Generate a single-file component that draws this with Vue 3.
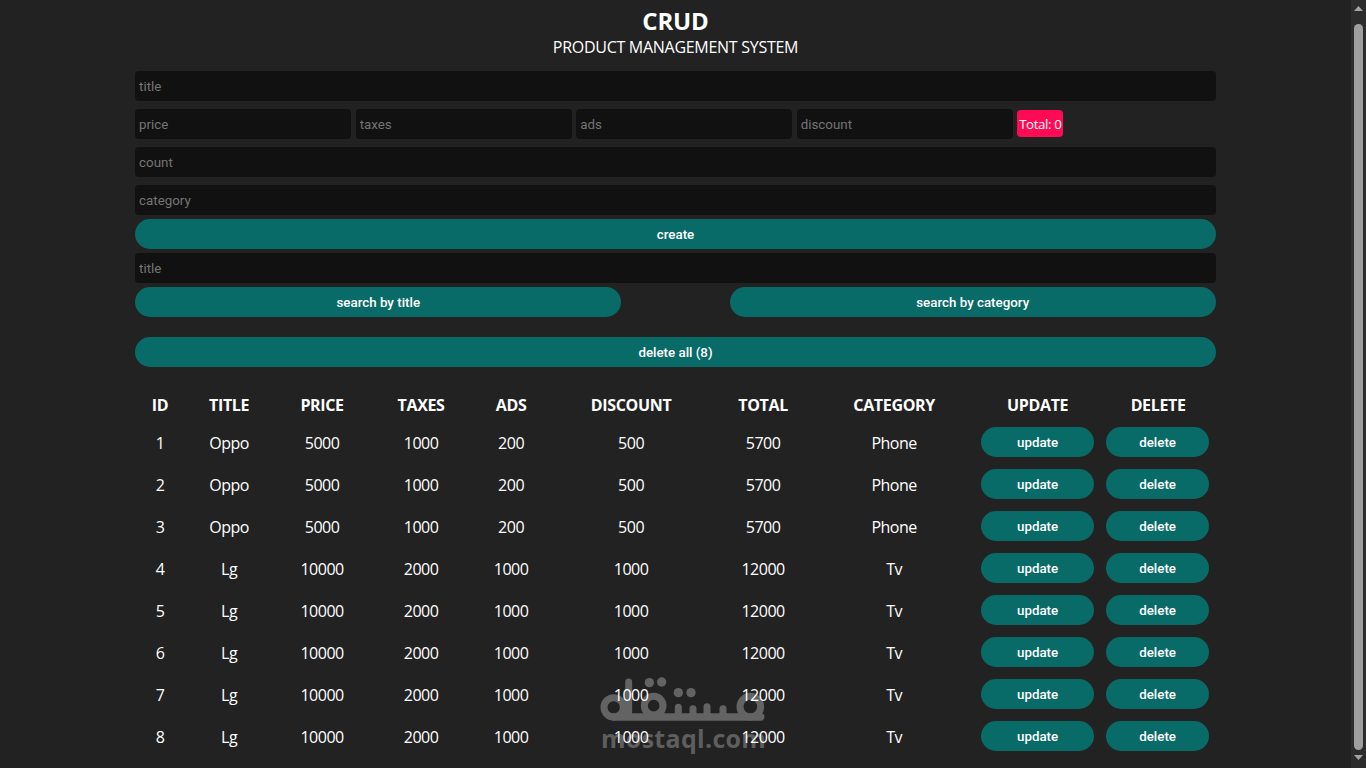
<script setup>
const headers = ['id', 'title', 'price', 'taxes', 'ads', 'discount', 'total', 'category', 'update', 'delete'];

const oppo = { title: 'Oppo', price: 5000, taxes: 1000, ads: 200, discount: 500, total: 5700, category: 'Phone' };
const lg = { title: 'Lg', price: 10000, taxes: 2000, ads: 1000, discount: 1000, total: 12000, category: 'Tv' };

const products = [oppo, oppo, oppo, lg, lg, lg, lg, lg].map((p, i) => ({ ...p, id: i + 1 }));
</script>

<template>
  <div class="page">
    <div class="crud">
      <div class="head">
        <h2>CRUD</h2>
        <p>PRODUCT MANAGEMENT SYSTEM</p>
      </div>

      <div class="inputs">
        <input type="text" placeholder="title" />
        <div class="price">
          <input type="text" placeholder="price" />
          <input type="text" placeholder="taxes" />
          <input type="text" placeholder="ads" />
          <input type="text" placeholder="discount" />
          <small class="total">Total: 0</small>
        </div>
        <input type="text" placeholder="count" />
        <input type="text" placeholder="category" />
        <button class="btn">create</button>
      </div>

      <div class="outputs">
        <input type="text" placeholder="title" />
        <div class="search-btns">
          <button class="btn">search by title</button>
          <button class="btn">search by category</button>
        </div>
        <button class="btn delete-all">delete all ({{ products.length }})</button>
      </div>

      <table>
        <colgroup>
          <col class="c-id" /><col class="c-title" /><col class="c-price" /><col class="c-taxes" /><col class="c-ads" />
          <col class="c-discount" /><col class="c-total" /><col class="c-category" /><col class="c-update" /><col class="c-delete" />
        </colgroup>
        <thead>
          <tr>
            <th v-for="h in headers" :key="h">{{ h }}</th>
          </tr>
        </thead>
        <tbody>
          <tr v-for="p in products" :key="p.id">
            <td>{{ p.id }}</td>
            <td>{{ p.title }}</td>
            <td>{{ p.price }}</td>
            <td>{{ p.taxes }}</td>
            <td>{{ p.ads }}</td>
            <td>{{ p.discount }}</td>
            <td>{{ p.total }}</td>
            <td>{{ p.category }}</td>
            <td class="cell-btn"><button class="btn row-btn">update</button></td>
            <td class="cell-btn"><button class="btn row-btn del">delete</button></td>
          </tr>
        </tbody>
      </table>

      <!-- site watermark: rounded logo mark with the domain under it -->
      <div class="watermark" aria-hidden="true">
        <svg class="wm-logo" viewBox="0 0 540 180">
          <g fill="none" stroke="#636363" stroke-width="21" stroke-linecap="round">
            <circle cx="56" cy="112" r="29" />
            <circle cx="176" cy="107" r="28" />
            <circle cx="466" cy="110" r="31" />
            <path d="M56 141H497" stroke-width="23" />
            <path d="M101 36V128" />
            <path d="M250 112V140M294 116V140M336 110V140M384 116V140" />
          </g>
          <g fill="#636363">
            <circle cx="163" cy="38" r="14" />
            <circle cx="200" cy="36" r="14" />
            <circle cx="250" cy="68" r="14" />
            <circle cx="288" cy="68" r="14" />
          </g>
        </svg>
        <span class="wm-en">mostaql.com</span>
      </div>
    </div>

    <!-- native scrollbar is not drawn in the screenshot, so this stands in for it -->
    <div class="scrollbar" aria-hidden="true">
      <svg class="arrow" viewBox="0 0 9 5"><polygon points="4.5,0 9,5 0,5" /></svg>
      <div class="thumb"></div>
      <svg class="arrow" viewBox="0 0 9 5"><polygon points="0,0 9,0 4.5,5" /></svg>
    </div>
  </div>
</template>

<style scoped>
.page {
  height: 768px;
  overflow: hidden;
  padding-right: 15px;
}

.crud {
  position: relative;
  width: 80%;
  margin: 0 auto;
  color: #fff;
}

.head {
  padding: 7px 0 8px;
  text-align: center;
}

.head h2 {
  margin: 0;
  font-size: 24px;
  line-height: 28px;
  font-weight: 700;
  letter-spacing: -0.2px;
}

.head p {
  margin: 0;
  font-size: 16px;
  line-height: 24px;
  letter-spacing: -0.28px;
}

.inputs,
.outputs {
  display: flex;
  flex-direction: column;
}

input {
  display: block;
  box-sizing: border-box;
  width: 100%;
  height: 30px;
  margin: 4px 0;
  padding: 4px;
  border: none;
  border-radius: 4px;
  outline: none;
  background: #111;
  color: #fff;
  font-family: Roboto, sans-serif;
  font-size: 13.33px;
}

input::placeholder {
  color: #757575;
}

.price {
  display: flex;
  align-items: center;
  gap: 4.4px;
  margin: 4px 0;
}

.price input {
  width: 20%;
  margin: 0;
}

.total {
  box-sizing: border-box;
  width: 46px;
  height: 27px;
  margin-top: -1px;
  border-radius: 4px;
  background: #ff0a54;
  font-size: 13.33px;
  line-height: 29px;
  letter-spacing: -0.4px;
  text-align: center;
  white-space: nowrap;
}

.btn {
  display: block;
  width: 100%;
  height: 30px;
  padding: 0;
  border: none;
  border-radius: 20px;
  background: #096b68;
  color: #fff;
  font-family: Roboto, sans-serif;
  font-size: 13.33px;
  font-weight: 500;
  cursor: pointer;
}

.search-btns {
  display: flex;
  justify-content: space-between;
}

.search-btns .btn {
  width: 45%;
}

.delete-all {
  margin-top: 20px;
}

table {
  position: relative;
  z-index: 1;
  width: 100%;
  margin-top: 21px;
  table-layout: fixed;
  border-spacing: 2px;
  text-align: center;
}

.c-id { width: 46px; }
.c-title { width: 88px; }
.c-price { width: 94px; }
.c-taxes { width: 100px; }
.c-ads { width: 76px; }
.c-discount { width: 160px; }
.c-total { width: 100px; }
.c-category { width: 158px; }
.c-update { width: 125px; }
.c-delete { width: 112px; }

th {
  padding: 5px 1px;
  font-size: 16px;
  line-height: 20px;
  font-weight: 700;
  letter-spacing: -0.35px;
  text-transform: uppercase;
}

td {
  padding: 3px 1px 1px;
  font-size: 16px;
  letter-spacing: -0.5px;
}

td.cell-btn {
  padding: 1px;
}

.row-btn {
  width: 113px;
  margin: 4px auto;
}

.row-btn.del {
  width: 103px;
  margin: 4px 0 4px 3px;
}

.watermark {
  position: absolute;
  left: 460px;
  top: 670px;
  width: 180px;
  display: flex;
  flex-direction: column;
  align-items: center;
  pointer-events: none;
}

.wm-logo {
  display: block;
  width: 180px;
  height: 60px;
}

.wm-en {
  margin-top: -6px;
  margin-left: -3px;
  color: #5e5e5e;
  font-family: "Open Sans", sans-serif;
  font-size: 25px;
  font-weight: 700;
  line-height: 28px;
  letter-spacing: 0.3px;
  white-space: nowrap;
}

.scrollbar {
  position: fixed;
  top: 0;
  right: 0;
  bottom: 0;
  width: 15px;
  display: flex;
  flex-direction: column;
  align-items: center;
  background: #2c2c2c;
}

.arrow {
  width: 9px;
  height: 5px;
  margin: 6px 0;
  fill: #a3a3a3;
  flex: none;
}

.thumb {
  width: 9px;
  height: 726px;
  margin: 7px 0 -1px;
  border-radius: 5px;
  background: #9f9f9f;
  flex: none;
}
</style>

<style>
body {
  background: #222;
  font-family: "Open Sans", sans-serif;
}
</style>
